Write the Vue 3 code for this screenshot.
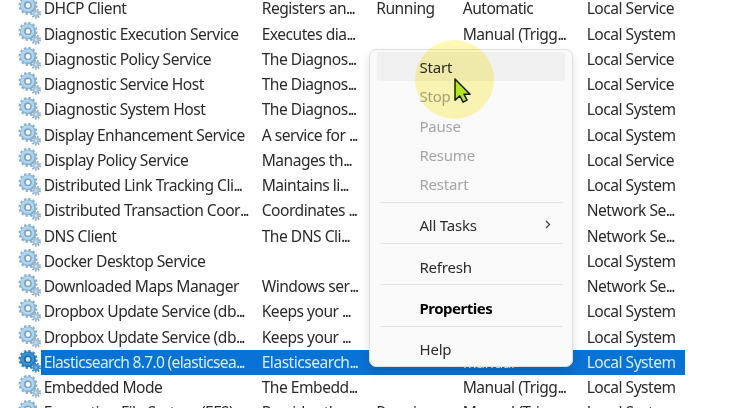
<script setup>
const S = 'Local Service'
const Y = 'Local System'
const N = 'Network Se...'
const rows = [
  ['DHCP Client', 'Registers an...', 'Running', 'Automatic', S],
  ['Diagnostic Execution Service', 'Executes dia...', '', 'Manual (Trigg...', Y],
  ['Diagnostic Policy Service', 'The Diagnos...', '', '', S],
  ['Diagnostic Service Host', 'The Diagnos...', '', '', S],
  ['Diagnostic System Host', 'The Diagnos...', '', '', Y],
  ['Display Enhancement Service', 'A service for ...', '', '', Y],
  ['Display Policy Service', 'Manages th...', '', '', S],
  ['Distributed Link Tracking Cli...', 'Maintains li...', '', '', Y],
  ['Distributed Transaction Coor...', 'Coordinates ...', '', '', N],
  ['DNS Client', 'The DNS Cli...', '', '', N],
  ['Docker Desktop Service', '', '', '', Y],
  ['Downloaded Maps Manager', 'Windows ser...', '', '', N],
  ['Dropbox Update Service (db...', 'Keeps your ...', '', '', Y],
  ['Dropbox Update Service (db...', 'Keeps your ...', '', '', Y],
  ['Elasticsearch 8.7.0 (elasticsea...', 'Elasticsearch...', '', 'Manual', Y],
  ['Embedded Mode', 'The Embedd...', '', 'Manual (Trigg...', Y],
  ['Encrypting File System (EFS)', 'Provides the...', 'Running', 'Manual (Trigg...', Y],
]
const selected = 14
const clipped = (t) => t.endsWith('...')
const stem = (t) => (clipped(t) ? t.slice(0, -3) : t)
const menu = [
  { label: 'Start', hover: true },
  { label: 'Stop', disabled: true },
  { label: 'Pause', disabled: true },
  { label: 'Resume', disabled: true },
  { label: 'Restart', disabled: true },
  { label: 'All Tasks', split: true, sub: true },
  { label: 'Refresh', split: true },
  { label: 'Properties', split: true, bold: true },
  { label: 'Help', split: true },
]
</script>

<template>
  <main class="screen">
    <div class="list">
      <div v-for="(r, i) in rows" :key="i" class="row" :class="{ selected: i === selected }">
        <svg class="gear" viewBox="0 0 22 22">
          <circle class="teeth" cx="9.6" cy="9" r="7.9" />
          <circle class="ring" cx="9.6" cy="9" r="5.3" />
          <circle class="shine" cx="9.1" cy="8.5" r="5" />
          <circle class="hub" cx="9.6" cy="9" r="2.9" />
          <circle class="small-teeth" cx="17.2" cy="16.8" r="3.9" />
          <circle class="small-ring" cx="17.2" cy="16.8" r="2.3" />
        </svg>
        <div class="cells">
          <span v-for="(c, j) in r" :key="j">{{ stem(c) }}<span v-if="clipped(c)" class="dots">...</span></span>
        </div>
      </div>
    </div>

    <div class="menu">
      <template v-for="m in menu" :key="m.label">
        <hr v-if="m.split" />
        <div class="item" :class="{ hover: m.hover, disabled: m.disabled, bold: m.bold }">
          <span>{{ m.label }}</span>
          <svg v-if="m.sub" class="chevron" viewBox="0 0 6 9"><path d="M1 1l3.5 3.5L1 8" /></svg>
        </div>
      </template>
    </div>

    <div class="halo"></div>
    <svg class="pointer" viewBox="0 0 20 28">
      <path d="M2 2v21.2l4.8-4.3 3.3 6.3 4-2-3.2-6h6.2z" />
    </svg>
  </main>
</template>

<style>
body { background: #fff; overflow: hidden; }
</style>

<style scoped>
.screen {
  position: relative;
  width: 755px;
  height: 408px;
  overflow: hidden;
  background: #fff;
  color: #2b2b2b;
  font: 15.6px/25.4px "Noto Sans", "Open Sans", sans-serif;
  letter-spacing: -0.5px;
}
.list { margin-top: -3.75px; display: flow-root; }
.row { display: flex; height: 25.25px; padding-left: 18px; }
.gear { width: 23px; height: 23px; flex: none; }
.cells {
  display: grid;
  grid-template-columns: 218px 114.6px 86.4px 124px 98px;
  width: 644px;
  padding-left: 2.7px;
  box-sizing: border-box;
  white-space: nowrap;
}
.dots { letter-spacing: -1.5px; }
.selected .cells { background: #0872d5; color: #d8edff; }
.selected .cells > span:first-child { letter-spacing: -0.68px; }
.gear circle { fill: none; }
.gear .teeth { stroke: #8fb0c9; stroke-width: 2.4; stroke-dasharray: 2.3 1.836; }
.gear .ring { stroke: #86b2d3; stroke-width: 4.6; }
.gear .shine { stroke: #b0d5ee; stroke-width: 2.9; }
.gear .hub { fill: #fff; stroke: #7ba2c1; stroke-width: 1.3; }
.gear .small-teeth { stroke: #8fa9bd; stroke-width: 1.9; stroke-dasharray: 1.5 1.22; }
.gear .small-ring { stroke: #9fc1d9; stroke-width: 2; fill: #cfe2ef; }
.selected .gear .teeth { stroke: #4186bd; }
.selected .gear .ring { stroke: #1c76bd; }
.selected .gear .shine { stroke: #3a90d3; }
.selected .gear .hub { stroke: #1b6cad; fill: #d5eaf8; }
.selected .gear .small-teeth { stroke: #3d81b8; }
.selected .gear .small-ring { stroke: #3f91cc; fill: #74b3de; }

.menu {
  position: absolute;
  left: 369px;
  top: 49px;
  width: 204px;
  height: 318px;
  box-sizing: border-box;
  padding: 2px 7px;
  border: 1px solid #dfdfdf;
  border-radius: 7px;
  background: #f9f9f9;
  box-shadow: 0 5px 10px rgba(0, 0, 0, 0.13);
  font-size: 15px;
  line-height: 31.3px;
  letter-spacing: -0.22px;
}
.item {
  display: flex;
  justify-content: space-between;
  height: 29.3px;
  width: 188px;
  box-sizing: border-box;
  padding: 0 14px 0 42.5px;
  border-radius: 3px;
}
.hover { background: #f0f0f0; }
.disabled { color: #a5a5a5; }
.bold { font-weight: 700; color: #000; letter-spacing: -0.5px; }
hr { margin: 3.3px 2px 7.7px 3px; border: 0; height: 1px; background: #e2e2e2; }
.chevron { width: 6px; height: 9px; margin-top: 9.5px; }
.chevron path { fill: none; stroke: #444; stroke-width: 1.3; }
.halo {
  position: absolute;
  left: 415px;
  top: 40px;
  width: 79px;
  height: 79px;
  border-radius: 50%;
  background: #fff578;
  opacity: 0.55;
  mix-blend-mode: multiply;
}
.pointer { position: absolute; left: 453px; top: 77px; width: 20px; height: 28px; }
.pointer path { fill: #b4e51e; stroke: #171c08; stroke-width: 1.5; stroke-linejoin: round; }
</style>
